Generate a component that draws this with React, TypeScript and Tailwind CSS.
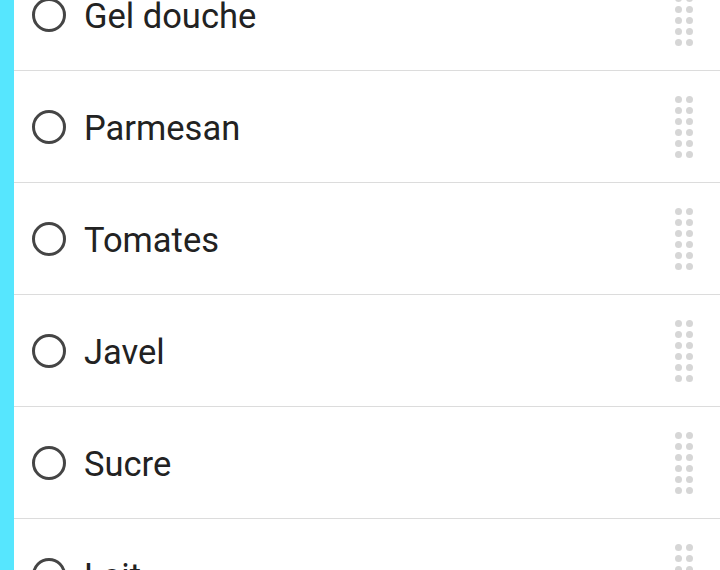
import React from 'react';

const items = ['Gel douche', 'Parmesan', 'Tomates', 'Javel', 'Sucre', 'Lait'];

const DragHandle = () => (
  <div className="grid grid-cols-2 gap-x-[4px] gap-y-[4px]">
    {Array.from({ length: 12 }).map((_, i) => (
      <span key={i} className="block w-[7px] h-[7px] rounded-full bg-[#d6d6d6]" />
    ))}
  </div>
);

const App = () => {
  return (
    <div className="h-[570px] w-[720px] overflow-hidden bg-white flex" style={{ fontFamily: 'Roboto, "Liberation Sans", sans-serif' }}>
      {/* list color strip */}
      <div className="w-[14px] shrink-0 bg-[#56e6fe]" />

      <ul className="flex-1 mt-[-41px]">
        {items.map((item) => (
          <li key={item} className="h-[112px] flex items-center border-b border-[#dcdcdc]">
            <span className="ml-[18px] w-[34px] h-[34px] rounded-full border-[3px] border-[#454545] shrink-0" />
            <span className="ml-[18px] pt-[3px] flex-1 text-[34.5px] text-[#222222] leading-none">{item}</span>
            <div className="mr-[27px]">
              <DragHandle />
            </div>
          </li>
        ))}
      </ul>
    </div>
  );
};

export default App;
